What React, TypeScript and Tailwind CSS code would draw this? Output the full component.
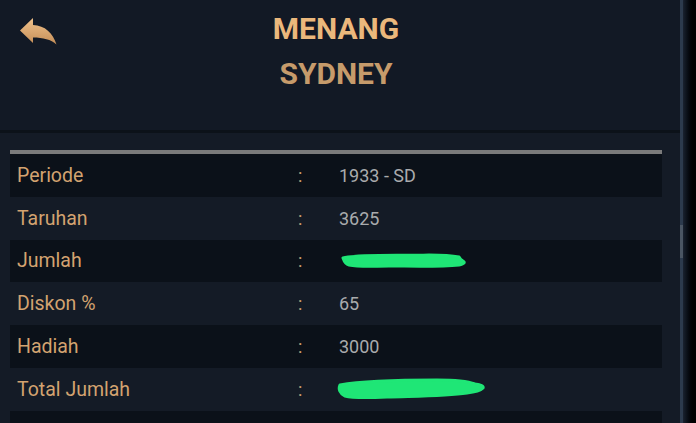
import React from "react";

const rows = [
  { label: "Periode", value: "1933 - SD" },
  { label: "Taruhan", value: "3625" },
  { label: "Jumlah", value: "", scribble: 1 },
  { label: "Diskon %", value: "65" },
  { label: "Hadiah", value: "3000" },
  { label: "Total Jumlah", value: "", scribble: 2 },
  { label: "", value: "" },
];

function Scribble1() {
  return (
    <svg width="140" height="24" viewBox="0 0 140 24" className="block">
      <path
        d="M4 8 C20 4 60 6 90 5 C105 5 115 6 120 7 C121 9 122 10 124 11 C126 12 126 14 120 15 C100 17 70 16 50 16 C35 16 20 17 10 15 C6 14 5 11 4 8 Z"
        fill="#1fe676"
        stroke="#1fe676"
        strokeWidth="3"
        strokeLinejoin="round"
      />
    </svg>
  );
}

function Scribble2() {
  return (
    <svg width="160" height="30" viewBox="0 0 160 30" className="block">
      <path
        d="M3 10 C25 6 60 5 100 5 C120 5 130 6 138 9 C144 10 147 11 146 13 C144 15 140 17 130 18 C110 21 80 21 50 22 C30 23 15 23 8 21 C3 19 1 14 3 10 Z"
        fill="#1fe676"
        stroke="#1fe676"
        strokeWidth="3"
        strokeLinejoin="round"
      />
    </svg>
  );
}

export default function App() {
  return (
    <div
      className="w-[696px] h-[423px] flex overflow-hidden bg-[#141b26]"
      style={{ fontFamily: "Roboto, 'Liberation Sans', sans-serif" }}
    >
      <div className="w-[680px] flex flex-col bg-[#141b26]">
        <div className="h-[130px] bg-[#121925] grid grid-cols-[70px_1fr_70px] shrink-0">
          <div className="pt-[18px] pl-[20px]">
            <svg width="37" height="27" viewBox="20 18 37 27" className="block">
              <defs>
                <linearGradient id="ag" x1="0" y1="0" x2="0" y2="1">
                  <stop offset="0" stopColor="#f1c28b" />
                  <stop offset="1" stopColor="#c48e58" />
                </linearGradient>
              </defs>
              <path
                d="M20 30.5 L33 18 L33 25 C45 25.5 53 33 56.5 44.5 C51 39.5 43 37.5 33 37.5 L33 43 Z"
                fill="url(#ag)"
              />
            </svg>
          </div>
          <div className="flex flex-col items-center pr-[8px]">
            <div className="mt-[12px] text-[30px] leading-[34px] font-bold text-[#ebb87c]">
              MENANG
            </div>
            <div className="mt-[11px] text-[30px] leading-[34px] font-bold text-[#c69b6b]">
              SYDNEY
            </div>
          </div>
          <div />
        </div>
        <div className="h-[3px] bg-[#0c1219] shrink-0" />
        <div className="pt-[17px] pl-[10px] pr-[18px]">
          <div className="h-[4px] bg-[#7b7b7b]" />
          {rows.map((r, i) => (
            <div
              key={i}
              className={
                "h-[42.8px] flex items-center " +
                (i % 2 === 0 ? "bg-[#0b1119]" : "bg-[#141b26]")
              }
            >
              <div className="w-[288px] pl-[7px] text-[19.5px] text-[#d3a370]">
                {r.label}
              </div>
              <div className="w-[41px] text-[18px] text-[#c9a070]">
                {r.label ? ":" : ""}
              </div>
              <div className="flex-1 text-[18px] text-[#a9abad]">
                {r.scribble === 1 ? (
                  <div className="mt-[2px]">
                    <Scribble1 />
                  </div>
                ) : r.scribble === 2 ? (
                  <div className="ml-[-2px] mt-[2px]">
                    <Scribble2 />
                  </div>
                ) : (
                  r.value
                )}
              </div>
            </div>
          ))}
        </div>
      </div>
      <div className="w-[16px] h-full flex">
        <div className="w-[3px] h-full bg-[#2c3a4d] flex flex-col">
          <div className="h-[225px]" />
          <div className="h-[33px] w-[5px] bg-[#4a5563]" />
        </div>
        <div className="flex-1 h-full bg-gradient-to-r from-[#1a2230] to-[#000000]" />
      </div>
    </div>
  );
}
